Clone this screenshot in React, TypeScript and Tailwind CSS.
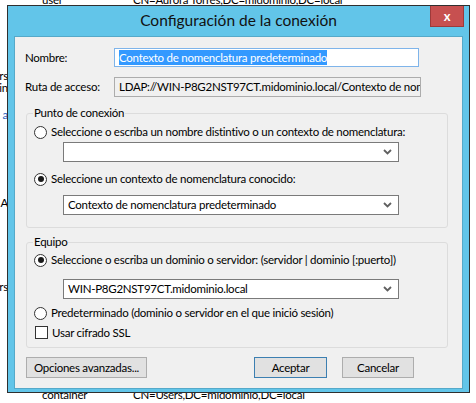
import React from 'react';

const font = "font-['Lato','Noto_Sans',sans-serif]";

function Radio({ checked }: { checked?: boolean }) {
  return (
    <span className="w-[13px] h-[13px] rounded-full border border-[#333] bg-white flex items-center justify-center shrink-0">
      {checked && <span className="w-[6px] h-[6px] rounded-full bg-[#1a1a1a]" />}
    </span>
  );
}

function Chevron() {
  return (
    <svg width="9" height="6" viewBox="0 0 9 6" className="shrink-0">
      <path d="M1 1 L4.5 4.5 L8 1" fill="none" stroke="#606060" strokeWidth="1.8" />
    </svg>
  );
}

function Combo({ value }: { value?: string }) {
  return (
    <div className="ml-[36px] w-[336px] h-[20px] border border-[#7a7a7a] bg-white flex items-center pl-[4px] pr-[6px]">
      <span className="flex-1 truncate">{value}</span>
      <Chevron />
    </div>
  );
}

function Group({ title, className, children }: { title: string; className?: string; children: React.ReactNode }) {
  return (
    <div className={`relative ml-[1px] w-[422px] border border-[#dcdcdc] rounded-[3px] ${className ?? ''}`}>
      <span className="absolute -top-[9px] left-[6px] px-[1px] bg-[#f0f0f0] leading-[16px]">{title}</span>
      {children}
    </div>
  );
}

export default function App() {
  return (
    <div className={`relative w-[476px] h-[403px] bg-white overflow-hidden text-[11.5px] tracking-[-0.25px] text-black whitespace-nowrap ${font}`}>
      {/* list behind the dialog */}
      <div className="flex flex-col">
        <div className="flex h-[10px] -mt-[8px] leading-[16px]">
          <span className="ml-[42px] w-[91px]">user</span>
          <span>CN=Aurora Torres,DC=midominio,DC=local</span>
        </div>
        <div className="w-[8px] overflow-hidden flex flex-col items-end leading-[16px] mt-[66px]">
          <span className="h-[12px]">Users</span>
          <span className="h-[14px]">Domain</span>
          <span className="h-[14px] mt-[13px] text-[#1f5fbf]">a</span>
          <span className="h-[16px] mt-[74px]">A</span>
          <span className="h-[16px] mt-[68px]">ers</span>
        </div>
        <div className="flex mt-[92px] leading-[16px]">
          <span className="ml-[42px] w-[91px]">container</span>
          <span>CN=Users,DC=midominio,DC=local</span>
        </div>
      </div>

      {/* dialog */}
      <div className="absolute left-[7px] top-[5px] w-[463px] h-[388px] border border-[#2f2f2f] bg-[#62c5e9] flex flex-col">
        <div className="relative h-[30px] flex items-center justify-center">
          <span className="text-[15.5px] tracking-normal text-[#111]">Configuración de la conexión</span>
          <div className="absolute top-0 right-[5px] w-[34px] h-[21px] bg-[#c75050] border border-[#9e3a3a] border-t-0 flex items-center justify-center text-white font-bold text-[13px] leading-none">
            x
          </div>
        </div>
        <div className="mx-[6px] mb-[3px] flex-1 bg-[#f0f0f0] border border-[#55a9c9] pl-[10px] pt-[11px]">
          <div className="flex items-center h-[19px]">
            <span className="w-[89px]">Nombre:</span>
            <div className="w-[305px] h-[19px] border border-[#7eb4ea] bg-white flex items-center pl-[4px]">
              <span className="bg-[#3399ff] text-white leading-[15px]">Contexto de nomenclatura predeterminado</span>
            </div>
          </div>
          <div className="flex items-center h-[20px] mt-[10px]">
            <span className="w-[89px]">Ruta de acceso:</span>
            <div className="w-[307px] h-[20px] border border-[#acacac] bg-[#f0f0f0] flex items-center pl-[4px] overflow-hidden">
              LDAP://WIN-P8G2NST97CT.midominio.local/Contexto de nomenclatura predeterminado
            </div>
          </div>

          <Group title="Punto de conexión" className="mt-[16px] h-[115px] pt-[11px]">
            <div className="flex items-center gap-[4px] pl-[7px] h-[14px]">
              <Radio />
              <span>Seleccione o escriba un nombre distintivo o un contexto de nomenclatura:</span>
            </div>
            <div className="mt-[3px]">
              <Combo />
            </div>
            <div className="flex items-center gap-[4px] pl-[7px] h-[14px] mt-[10px]">
              <Radio checked />
              <span>Seleccione un contexto de nomenclatura conocido:</span>
            </div>
            <div className="mt-[9px]">
              <Combo value="Contexto de nomenclatura predeterminado" />
            </div>
          </Group>

          <Group title="Equipo" className="mt-[14px] h-[106px] pt-[10px]">
            <div className="flex items-center gap-[4px] pl-[7px] h-[14px]">
              <Radio checked />
              <span>Seleccione o escriba un dominio o servidor: (servidor | dominio [:puerto])</span>
            </div>
            <div className="mt-[12px]">
              <Combo value="WIN-P8G2NST97CT.midominio.local" />
            </div>
            <div className="flex items-center gap-[4px] pl-[7px] h-[14px] mt-[7px]">
              <Radio />
              <span>Predeterminado (dominio o servidor en el que inició sesión)</span>
            </div>
            <div className="flex items-center gap-[4px] pl-[8px] h-[13px] mt-[6px]">
              <span className="w-[13px] h-[13px] border border-[#333] bg-white shrink-0" />
              <span>Usar cifrado SSL</span>
            </div>
          </Group>

          <div className="flex mt-[9px] ml-[1px]">
            <div className="w-[121px] h-[21px] bg-[#e1e1e1] border border-[#adadad] flex items-center justify-center">
              Opciones avanzadas...
            </div>
            <div className="ml-[107px] w-[73px] h-[21px] bg-[#e1e1e1] border border-[#3c7fb1] flex items-center justify-center">
              Aceptar
            </div>
            <div className="ml-[15px] w-[72px] h-[21px] bg-[#e1e1e1] border border-[#adadad] flex items-center justify-center">
              Cancelar
            </div>
          </div>
        </div>
      </div>
    </div>
  );
}
